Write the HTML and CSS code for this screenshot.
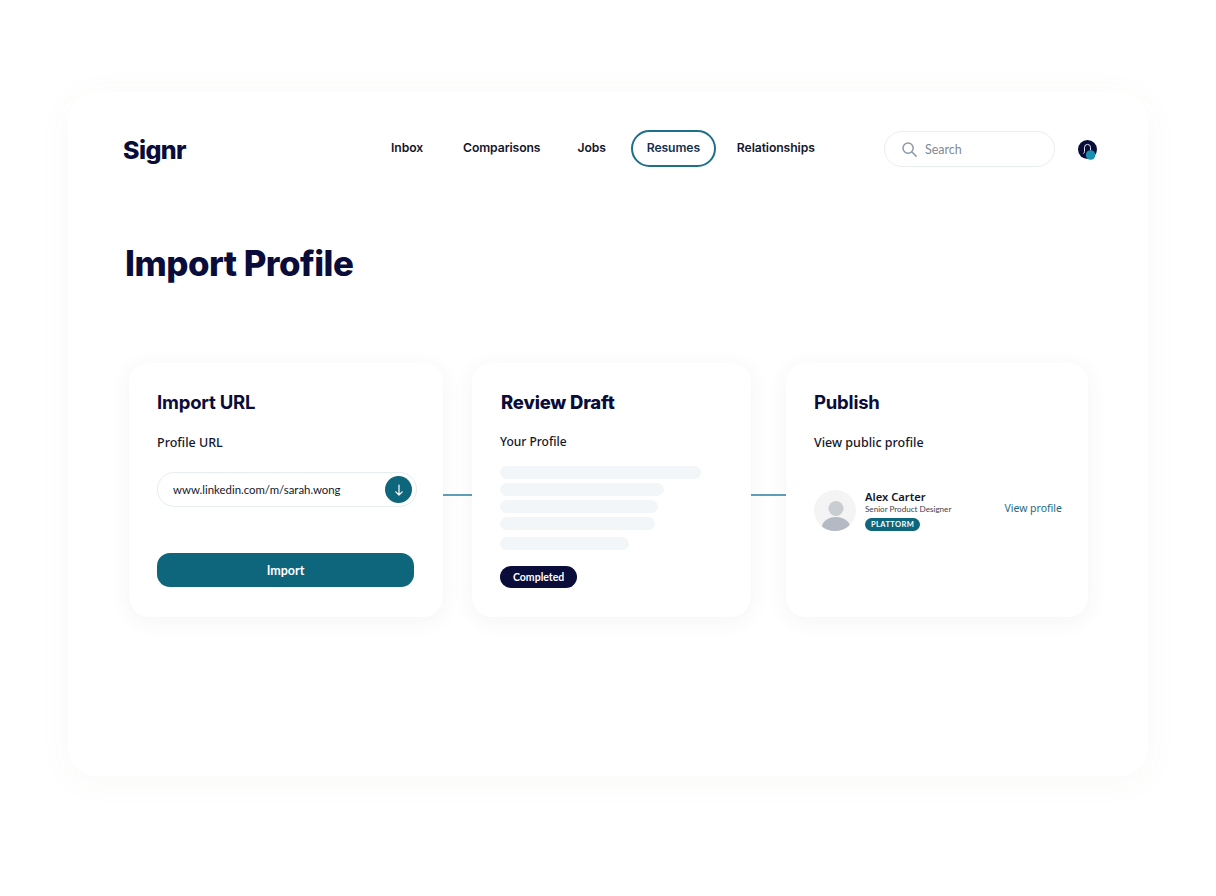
FILE: index.html
```html
<!DOCTYPE html>
<html lang="en">
<head>
  <meta charset="UTF-8" />
  <title>Signr - Import Profile</title>
  <link rel="stylesheet" href="styles.css">
</head>
<body>
  <div class="window">
    <header class="topbar">
      <div class="logo">Signr</div>
      <nav class="nav">
        <a href="#" class="nav-inbox">Inbox</a>
        <a href="#" class="nav-comparisons">Comparisons</a>
        <a href="#" class="nav-jobs">Jobs</a>
        <a href="#" class="nav-active">Resumes</a>
        <a href="#" class="nav-relationships">Relationships</a>
      </nav>
      <div class="search">
        <svg width="17" height="17" viewBox="0 0 18 18" fill="none" stroke="#8d9aa8" stroke-width="1.6" stroke-linecap="round">
          <circle cx="7.5" cy="7.5" r="5.4" />
          <path d="M11.6 11.6 16 16" />
        </svg>
        <span>Search</span>
      </div>
      <div class="avatar">
        <svg width="19" height="20" viewBox="0 0 19 20">
          <circle cx="9.5" cy="9.5" r="9.5" fill="#0a0c3a" />
          <path d="M5.4 13.6c.7-.5 1.1-1 1.1-2V7.4a3 3 0 0 1 6 0v3" fill="none" stroke="#dfe5ee" stroke-width="1" />
          <circle cx="12.6" cy="15" r="4.8" fill="#1b8fae" />
        </svg>
      </div>
    </header>

    <h1 class="page-title">Import Profile</h1>

    <section class="steps">
      <div class="card card-import">
        <h2>Import URL</h2>
        <p class="card-label">Profile URL</p>
        <div class="url-field">
          <span>www.linkedin.com/m/sarah.wong</span>
          <div class="url-icon">
            <svg width="12" height="12" viewBox="0 0 12 12" fill="none" stroke="#fff" stroke-width="1.2" stroke-linecap="round" stroke-linejoin="round">
              <path d="M6 1v10M2.8 7.8 6 11l3.2-3.2" />
            </svg>
          </div>
        </div>
        <button class="import-btn">Import</button>
      </div>

      <div class="connector connector-a"></div>

      <div class="card card-review">
        <h2>Review Draft</h2>
        <p class="card-label">Your Profile</p>
        <div class="skeleton">
          <div class="line line-1"></div>
          <div class="line line-2"></div>
          <div class="line line-3"></div>
          <div class="line line-4"></div>
          <div class="line line-5"></div>
        </div>
        <span class="status">Completed</span>
      </div>

      <div class="connector connector-b"></div>

      <div class="card card-publish">
        <h2>Publish</h2>
        <p class="card-label">View public profile</p>
        <div class="profile-row">
          <div class="profile-pic">
            <svg width="42" height="41" viewBox="0 0 42 41">
              <circle cx="22" cy="18.5" r="7.5" fill="#c9ccd1" />
              <ellipse cx="22" cy="37" rx="14" ry="10" fill="#b4bac3" />
            </svg>
          </div>
          <div class="profile-info">
            <div class="profile-name">Alex Carter</div>
            <div class="profile-role">Senior Product Designer</div>
            <span class="tag">PLATTORM</span>
          </div>
          <a href="#" class="view-link">View profile</a>
        </div>
      </div>
    </section>
  </div>
</body>
</html>
```

FILE: styles.css
```css
* {
  box-sizing: border-box;
  margin: 0;
  padding: 0;
}

body {
  font-family: 'Lato', 'Inter', sans-serif;
  background-color: #fff;
  padding: 92px 68px 120px;
  color: #0a0c3a;
}

.window {
  width: 1080px;
  height: 684px;
  background: #fff;
  border-radius: 28px;
  padding: 38px 51px 0 55px;
  box-shadow: 0 4px 36px rgba(120, 110, 70, 0.04);
}

/* --- Top bar --- */
.topbar {
  display: flex;
  align-items: center;
  height: 38px;
}

.logo {
  font-family: 'Inter', sans-serif;
  font-size: 25px;
  font-weight: 800;
  letter-spacing: -0.6px;
  color: #0a0c3a;
  width: 268px;
  padding-top: 1px;
}

.nav {
  display: flex;
  align-items: center;
  width: 493px;
  margin-top: -1px;
}

.nav a {
  font-family: 'Inter', sans-serif;
  font-size: 12.2px;
  font-weight: 600;
  color: #14162b;
  text-decoration: none;
  letter-spacing: -0.1px;
  padding-bottom: 3px;
}

.nav-inbox { margin-right: 40px; }
.nav-comparisons { margin-right: 37px; }
.nav-jobs { margin-right: 25px; }

.nav .nav-active {
  display: flex;
  align-items: center;
  justify-content: center;
  width: 85px;
  height: 37px;
  margin-right: 21px;
  border: 2px solid #1e6f8a;
  border-radius: 19px;
  color: #12304f;
}

.search {
  display: flex;
  align-items: center;
  gap: 7px;
  width: 171px;
  height: 36px;
  padding-left: 16px;
  border: 1.5px solid #e9edf2;
  border-radius: 18px;
  font-size: 12.5px;
  color: #7f8a96;
}

.avatar {
  display: flex;
  margin-left: 23px;
  margin-top: 2px;
}

.page-title {
  font-family: 'Inter', sans-serif;
  font-size: 34.8px;
  font-weight: 800;
  letter-spacing: -0.5px;
  line-height: 40px;
  color: #0a0c3a;
  margin: 75px 0 0 2px;
}

/* --- Step cards --- */
.steps {
  display: flex;
  align-items: stretch;
  height: 254px;
  margin: 80px 0 0 6px;
}

.card {
  background: #fff;
  border-radius: 20px;
  box-shadow: 0 4px 22px rgba(60, 70, 80, 0.06);
  padding: 27px 28px 0;
  flex-shrink: 0;
}

.card-import { width: 314px; }
.card-review { width: 279px; }
.card-publish { width: 302px; padding-right: 26px; }

.card h2 {
  font-family: 'Inter', sans-serif;
  font-size: 18.5px;
  font-weight: 700;
  line-height: 24px;
  letter-spacing: -0.2px;
  color: #0a0c3a;
}

.card-review h2 {
  font-weight: 800;
  padding-left: 1px;
}

.card-label {
  font-family: 'Noto Sans', sans-serif;
  font-size: 12.5px;
  font-weight: 500;
  line-height: 18px;
  color: #14162b;
  margin-top: 20px;
}

.card-review .card-label {
  font-size: 12px;
  margin-top: 19px;
}

.connector {
  align-self: center;
  height: 2px;
  background: #5f9fb5;
  margin-top: 10px;
}

.connector-a { width: 29px; }
.connector-b { width: 35px; }

/* --- Import card --- */
.url-field {
  display: flex;
  align-items: center;
  justify-content: space-between;
  width: 260px;
  height: 35px;
  margin-top: 20px;
  padding: 0 4px 0 15px;
  border: 1px solid #e6ecf0;
  border-radius: 18px;
  font-family: 'Lato', sans-serif;
  font-size: 11.4px;
  color: #14162b;
}

.url-icon {
  display: flex;
  align-items: center;
  justify-content: center;
  width: 27px;
  height: 27px;
  border-radius: 50%;
  background: #0e667c;
}

.import-btn {
  display: block;
  width: 257px;
  height: 34px;
  margin-top: 46px;
  border: none;
  border-radius: 13px;
  background: #0e667c;
  color: #fff;
  font-family: 'Lato', sans-serif;
  font-size: 12.5px;
  font-weight: 700;
}

/* --- Review card --- */
.skeleton {
  display: flex;
  flex-direction: column;
  gap: 4px;
  margin-top: 15px;
}

.line {
  height: 13px;
  border-radius: 7px;
  background: #f2f6f9;
}

.line-1 { width: 201px; }
.line-2 { width: 164px; }
.line-3 { width: 158px; }
.line-4 { width: 155px; }
.line-5 { width: 129px; margin-top: 3px; }

.status {
  display: inline-block;
  margin-top: 16px;
  padding: 0 13px;
  height: 22px;
  line-height: 22px;
  border-radius: 11px;
  background: #0a0c3a;
  color: #fff;
  font-size: 10.5px;
  font-weight: 700;
}

/* --- Publish card --- */
.profile-row {
  display: flex;
  align-items: flex-start;
  margin-top: 38px;
}

.profile-pic {
  display: flex;
  width: 42px;
  height: 41px;
  border-radius: 50%;
  background: #f4f4f5;
  overflow: hidden;
  flex-shrink: 0;
}

.profile-info {
  margin-left: 9px;
  flex-shrink: 0;
}

.profile-name {
  font-family: 'Noto Sans', sans-serif;
  font-size: 11.2px;
  font-weight: 600;
  line-height: 14px;
  color: #14162b;
}

.profile-role {
  font-size: 8.1px;
  line-height: 11px;
  color: #3d4350;
}

.tag {
  display: block;
  width: fit-content;
  margin-top: 3px;
  padding: 0 6px;
  height: 13px;
  line-height: 13px;
  border-radius: 7px;
  background: #0e667c;
  color: #fff;
  font-size: 7.5px;
  font-weight: 700;
  letter-spacing: 0.4px;
}

.view-link {
  font-family: 'Noto Sans', sans-serif;
  font-size: 10.5px;
  line-height: 14px;
  color: #1f6a80;
  text-decoration: none;
  margin: 11px 0 0 auto;
  white-space: nowrap;
}
```
